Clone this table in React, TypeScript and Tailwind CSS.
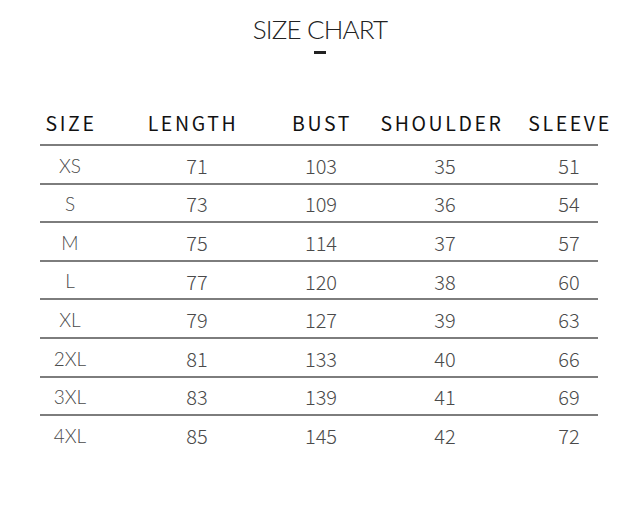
import React from "react";

const rows: [string, number, number, number, number][] = [
  ["XS", 71, 103, 35, 51],
  ["S", 73, 109, 36, 54],
  ["M", 75, 114, 37, 57],
  ["L", 77, 120, 38, 60],
  ["XL", 79, 127, 39, 63],
  ["2XL", 81, 133, 40, 66],
  ["3XL", 83, 139, 41, 69],
  ["4XL", 85, 145, 42, 72],
];

const grid = "grid grid-cols-[60px_194px_54px_194px_54px]";
const cell = "flex justify-center whitespace-nowrap";

export default function App() {
  return (
    <div className="w-[640px] h-[519px] bg-white overflow-hidden">
      <div className="flex flex-col items-center pt-[13px]">
        <div className="text-[26px] leading-[32px] text-[#222] font-light tracking-[-0.8px] font-['Lato',sans-serif]">
          SIZE CHART
        </div>
        <div className="mt-[6px] w-[12px] h-[3px] bg-[#222]" />
      </div>
      <div className="ml-[40px] w-[558px] mt-[47px]">
        <div className={`${grid} h-[43px] items-center text-[19.5px] font-normal tracking-[2.6px] text-[#111] font-['Noto_Sans_CJK_SC','Noto_Sans',sans-serif]`}>
          <div className={`${cell} pl-[2px]`}>SIZE</div>
          <div className={`${cell} pr-[8px]`}>LENGTH</div>
          <div className={`${cell} pl-[2px]`}>BUST</div>
          <div className={`${cell} pr-[6px]`}>SHOULDER</div>
          <div className={`${cell} pl-[2px]`}>SLEEVE</div>
        </div>
        {rows.map((r) => (
          <div
            key={r[0]}
            className={`${grid} h-[38.6px] items-center border-t-2 border-[#7d7d7d] text-[20px] text-[#4a4a4a] font-light`}
          >
            <div className={`${cell} font-['Lato',sans-serif] text-[19px] pt-[3px]`}>{r[0]}</div>
            {r.slice(1).map((v, j) => (
              <div key={j} className={`${cell} font-['Noto_Sans_CJK_SC','Noto_Sans',sans-serif] pt-[3px]`}>
                {v}
              </div>
            ))}
          </div>
        ))}
      </div>
    </div>
  );
}
